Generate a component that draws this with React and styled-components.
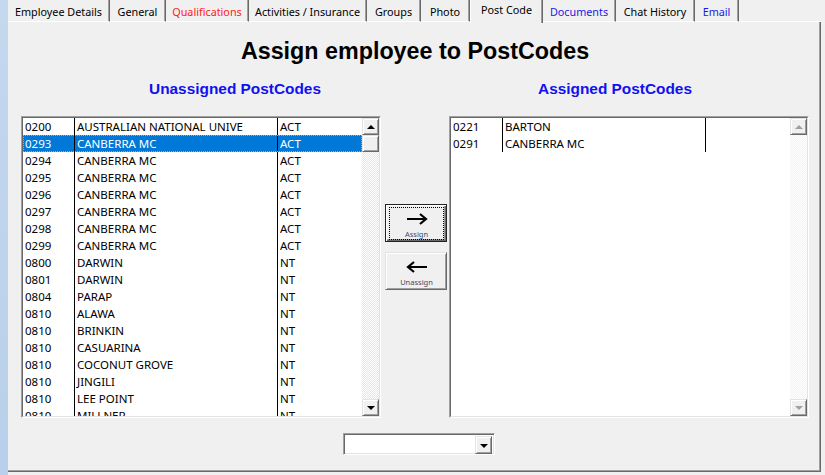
import styled, { createGlobalStyle, css } from "styled-components";

// Estilos globais
const GlobalStyle = createGlobalStyle`
  body {
    margin: 0;
    background: #f0f0f0;
    font-family: "Noto Sans", "Liberation Sans", sans-serif;
    overflow: hidden;
  }
`;

const Page = styled.div`
  display: flex;
  width: 825px;
  height: 475px;
`;

const SideStrip = styled.div`
  width: 8px;
  background: linear-gradient(180deg, #c4d8ee 0%, #b9d0ea 100%);
`;

const Main = styled.div`
  display: flex;
  flex-direction: column;
  width: 813px;
`;

// Abas
const TabBar = styled.div`
  display: flex;
  height: 22px;
  box-sizing: border-box;
`;

const Tab = styled.div`
  width: ${(p) => p.$w}px;
  box-sizing: border-box;
  height: 22px;
  text-align: center;
  font-size: 10.8px;
  line-height: 24px;
  color: ${(p) => p.$color || "#000"};
  border-right: 1px solid #696969;
  box-shadow: inset -1px 0 #a0a0a0;
  border-bottom: 1px solid #fff;
  white-space: nowrap;
  ${(p) =>
    p.$active &&
    css`
      height: 23px;
      line-height: 20px;
      border-bottom: none;
      border-left: 1px solid #fff;
      position: relative;
      z-index: 1;
    `}
`;

const TabFill = styled.div`
  flex: 1;
  border-bottom: 1px solid #fff;
`;

// Painel
const Panel = styled.div`
  box-sizing: border-box;
  height: 450px;
  padding: 15px 0 0 13px;
  border-right: 1px solid #696969;
  border-bottom: 1px solid #696969;
  box-shadow: inset -1px -1px #a0a0a0;
  display: flex;
  flex-direction: column;
`;

const Title = styled.h1`
  margin: 0;
  width: 788px;
  text-align: center;
  font-family: "Liberation Sans", Arial, sans-serif;
  font-weight: bold;
  font-size: 23.3px;
  line-height: 28px;
  color: #000;
`;

const Headings = styled.div`
  display: grid;
  grid-template-columns: 428px 332px;
  margin-top: 14px;
`;

const Heading = styled.h2`
  margin: 0;
  text-align: center;
  font-family: "Liberation Sans", Arial, sans-serif;
  font-weight: bold;
  font-size: 15.4px;
  line-height: 20px;
  color: #1010f0;
`;

const ListsRow = styled.div`
  display: flex;
  margin-top: 17px;
  height: 302px;
`;

const ListOuter = styled.div`
  box-sizing: border-box;
  width: 360px;
  height: 302px;
  border: 1px solid;
  border-color: #a0a0a0 #fff #fff #a0a0a0;
`;

const ListInner = styled.div`
  box-sizing: border-box;
  height: 100%;
  border: 1px solid;
  border-color: #696969 #e3e3e3 #e3e3e3 #696969;
  background: #fff;
  display: flex;
`;

const Rows = styled.div`
  width: 339px;
  overflow: hidden;
`;

const Row = styled.div`
  display: grid;
  grid-template-columns: 51px 203px 85px;
  height: 17px;
  font-size: 11.5px;
  line-height: 17px;
  color: #000;
  white-space: nowrap;
  ${(p) =>
    p.$selected &&
    css`
      background: #0078d7;
      color: #fff;
      outline: 1px dotted #e8a040;
      outline-offset: -1px;
    `}
`;

const Cell = styled.div`
  padding-left: 2px;
  border-left: ${(p) => (p.$first ? "none" : "1px solid #000")};
  overflow: hidden;
`;

// Barra de rolagem
const Scrollbar = styled.div`
  width: 17px;
  display: flex;
  flex-direction: column;
  background: repeating-conic-gradient(#e6e6e6 0 25%, #fff 0 50%) 0 0 / 2px 2px;
  ${(p) =>
    p.$disabled &&
    css`
      background: repeating-conic-gradient(#f2f2f2 0 25%, #fff 0 50%) 0 0 / 2px 2px;
    `}
`;

const raised = css`
  box-sizing: border-box;
  background: #f0f0f0;
  border: 1px solid;
  border-color: #e3e3e3 #696969 #696969 #e3e3e3;
  box-shadow: inset 1px 1px #fff, inset -1px -1px #a0a0a0;
`;

const ArrowBtn = styled.div`
  ${raised};
  height: 17px;
  display: flex;
  align-items: center;
  justify-content: center;
`;

const Triangle = styled.div`
  width: 0;
  height: 0;
  border-left: 4px solid transparent;
  border-right: 4px solid transparent;
  ${(p) =>
    p.$down
      ? css`
          border-top: 4px solid ${p.$disabled ? "#a0a0a0" : "#000"};
          margin-top: 1px;
        `
      : css`
          border-bottom: 4px solid ${p.$disabled ? "#a0a0a0" : "#000"};
        `}
`;

const Thumb = styled.div`
  ${raised};
  height: 17px;
`;

const Track = styled.div`
  flex: 1;
`;

// Botões Assign / Unassign
const ButtonCol = styled.div`
  width: 62px;
  margin: 0 2px 0 4px;
  padding-top: 88px;
  display: flex;
  flex-direction: column;
  gap: 10px;
`;

const MoveButton = styled.button`
  ${raised};
  width: 62px;
  height: 38px;
  padding: 0;
  display: flex;
  flex-direction: column;
  align-items: center;
  font-family: "Noto Sans", "Liberation Sans", sans-serif;
  ${(p) =>
    p.$default &&
    css`
      border-color: #222;
      box-shadow: inset 1px 1px #fff, inset -1px -1px #696969, inset -2px -2px #a0a0a0;
    `}
`;

const FocusRect = styled.div`
  box-sizing: border-box;
  margin: 2px 2px 2px 3px;
  flex: 1;
  align-self: stretch;
  display: flex;
  flex-direction: column;
  align-items: center;
  border: 1px dotted ${(p) => (p.$on ? "#000" : "transparent")};
`;

const ArrowIcon = styled.svg`
  margin-top: 5px;
`;

const BtnLabel = styled.span`
  font-size: 7.5px;
  line-height: 9px;
  margin-top: 5px;
  color: #3c4a6a;
`;

// Combo inferior
const ComboRow = styled.div`
  display: flex;
  justify-content: center;
  width: 788px;
  padding-left: 4px;
  margin-top: 15px;
`;

const Combo = styled.div`
  box-sizing: border-box;
  width: 152px;
  height: 22px;
  border: 1px solid;
  border-color: #a0a0a0 #fff #fff #a0a0a0;
  box-shadow: inset 1px 1px #696969, inset -1px -1px #e3e3e3;
  background: #fff;
  display: flex;
  justify-content: flex-end;
  padding: 2px;
`;

const ComboBtn = styled.div`
  ${raised};
  width: 17px;
  height: 18px;
  display: flex;
  align-items: center;
  justify-content: center;
`;

const tabs = [
  { label: "Employee Details", w: 102 },
  { label: "General", w: 56 },
  { label: "Qualifications", w: 83, color: "#ff2020" },
  { label: "Activities / Insurance", w: 118 },
  { label: "Groups", w: 54 },
  { label: "Photo", w: 49 },
  { label: "Post Code", w: 73, active: true },
  { label: "Documents", w: 73, color: "#1a1ae6" },
  { label: "Chat History", w: 79 },
  { label: "Email", w: 44, color: "#1a1ae6" },
];

const unassigned = [
  ["0200", "AUSTRALIAN NATIONAL UNIVE", "ACT"],
  ["0293", "CANBERRA MC", "ACT"],
  ["0294", "CANBERRA MC", "ACT"],
  ["0295", "CANBERRA MC", "ACT"],
  ["0296", "CANBERRA MC", "ACT"],
  ["0297", "CANBERRA MC", "ACT"],
  ["0298", "CANBERRA MC", "ACT"],
  ["0299", "CANBERRA MC", "ACT"],
  ["0800", "DARWIN", "NT"],
  ["0801", "DARWIN", "NT"],
  ["0804", "PARAP", "NT"],
  ["0810", "ALAWA", "NT"],
  ["0810", "BRINKIN", "NT"],
  ["0810", "CASUARINA", "NT"],
  ["0810", "COCONUT GROVE", "NT"],
  ["0810", "JINGILI", "NT"],
  ["0810", "LEE POINT", "NT"],
  ["0810", "MILLNER", "NT"],
];

const assigned = [
  ["0221", "BARTON", ""],
  ["0291", "CANBERRA MC", ""],
];

const ListBox = ({ rows, selected, disabled }) => (
  <ListOuter>
    <ListInner>
      <Rows>
        {rows.map((r, i) => (
          <Row key={i} $selected={i === selected}>
            <Cell $first>{r[0]}</Cell>
            <Cell>{r[1]}</Cell>
            <Cell>{r[2]}</Cell>
          </Row>
        ))}
      </Rows>
      <Scrollbar $disabled={disabled}>
        <ArrowBtn>
          <Triangle $disabled={disabled} />
        </ArrowBtn>
        {!disabled && <Thumb />}
        <Track />
        <ArrowBtn>
          <Triangle $down $disabled={disabled} />
        </ArrowBtn>
      </Scrollbar>
    </ListInner>
  </ListOuter>
);

const Arrow = ({ left }) => (
  <ArrowIcon width="22" height="12" viewBox="0 0 22 12">
    <path
      d={left ? "M2 6 H21 M8 1 L2 6 L8 11" : "M1 6 H20 M14 1 L20 6 L14 11"}
      stroke="#000"
      strokeWidth="2.2"
      fill="none"
    />
  </ArrowIcon>
);

const App = () => {
  return (
    <>
      <GlobalStyle />
      <Page>
        <SideStrip />
        <Main>
          <TabBar>
            {tabs.map((t) => (
              <Tab key={t.label} $w={t.w} $color={t.color} $active={t.active}>
                {t.label}
              </Tab>
            ))}
            <TabFill />
          </TabBar>
          <Panel>
            <Title>Assign employee to PostCodes</Title>
            <Headings>
              <Heading>Unassigned PostCodes</Heading>
              <Heading>Assigned PostCodes</Heading>
            </Headings>
            <ListsRow>
              <ListBox rows={unassigned} selected={1} />
              <ButtonCol>
                <MoveButton $default>
                  <FocusRect $on>
                    <Arrow />
                    <BtnLabel>Assign</BtnLabel>
                  </FocusRect>
                </MoveButton>
                <MoveButton>
                  <FocusRect>
                    <Arrow left />
                    <BtnLabel>Unassign</BtnLabel>
                  </FocusRect>
                </MoveButton>
              </ButtonCol>
              <ListBox rows={assigned} disabled />
            </ListsRow>
            <ComboRow>
              <Combo>
                <ComboBtn>
                  <Triangle $down />
                </ComboBtn>
              </Combo>
            </ComboRow>
          </Panel>
        </Main>
      </Page>
    </>
  );
};

export default App;
